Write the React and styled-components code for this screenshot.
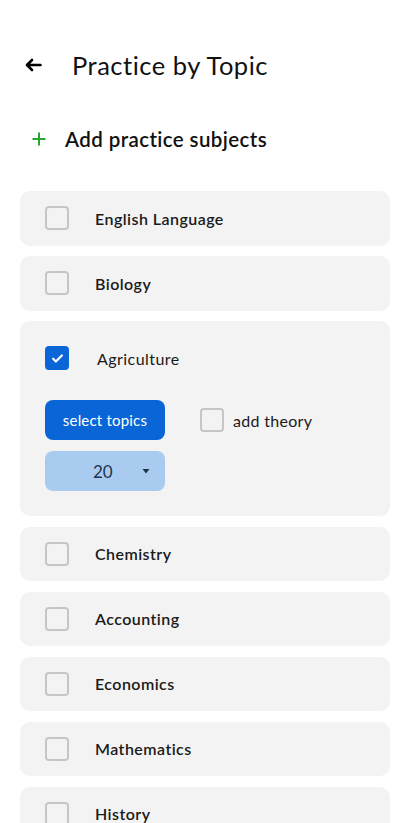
import React, { useState } from "react";
import styled, { createGlobalStyle } from "styled-components";

const Global = createGlobalStyle`
  html, body { margin: 0; padding: 0; background: #ffffff; }
  body { font-family: Lato, "Open Sans", sans-serif; color: #111; -webkit-font-smoothing: antialiased; }
  * { box-sizing: border-box; }
`;

const Page = styled.div`
  width: 411px;
  padding: 0 21px 0 20px;
`;

const Header = styled.header`
  display: flex;
  align-items: center;
  height: 62px;
  margin-top: 34px;
  padding-left: 5px;
  gap: 30px;
`;

const Title = styled.h1`
  margin: 0;
  font-size: 25.5px;
  font-weight: 400;
  color: #111;
  letter-spacing: 0.5px;
`;

const AddRow = styled.div`
  display: flex;
  align-items: center;
  gap: 19px;
  padding-left: 12px;
  height: 40px;
  margin-top: 23px;
  margin-bottom: 32px;
`;

const AddText = styled.span`
  font-size: 20.5px;
  font-weight: 600;
  color: #111;
  letter-spacing: 0.4px;
`;

const List = styled.div`
  display: flex;
  flex-direction: column;
  gap: 10.5px;
`;

const Card = styled.div`
  background: #f3f3f3;
  border-radius: 10px;
  padding: ${(p) => (p.$open ? "25px 25px 25px" : "0 25px")};
  min-height: 54.5px;
  display: flex;
  flex-direction: column;
  justify-content: center;
`;

const Row = styled.div`
  display: flex;
  align-items: center;
  gap: ${(p) => p.$gap || 26}px;
`;

const Box = styled.span`
  width: 24px;
  height: 24px;
  flex: none;
  border-radius: 4px;
  border: ${(p) => (p.$checked ? "none" : "2px solid #c6c6c6")};
  background: ${(p) => (p.$checked ? "#0a66d6" : "transparent")};
  display: inline-flex;
  align-items: center;
  justify-content: center;
`;

const Label = styled.span`
  font-size: 16px;
  font-weight: ${(p) => p.$weight || 600};
  color: #1a1a1a;
  letter-spacing: 0.45px;
`;

const Controls = styled.div`
  display: grid;
  grid-template-columns: 120px auto;
  column-gap: 35px;
  row-gap: 11px;
  margin-top: 30px;
  align-items: center;
`;

const Button = styled.button`
  height: 40px;
  width: 120px;
  border: none;
  border-radius: 8px;
  background: #0a66d6;
  color: #fff;
  font-family: inherit;
  font-size: 15px;
  letter-spacing: 0.2px;
  padding: 0;
`;

const Select = styled.div`
  height: 40px;
  width: 120px;
  border-radius: 8px;
  background: #a9cbf0;
  color: #1e3550;
  display: flex;
  align-items: center;
  font-size: 17px;
  padding-left: 48px;
  gap: 29px;
`;

const Theory = styled.div`
  display: flex;
  align-items: center;
  gap: 9px;
  font-size: 16px;
  color: #1a1a1a;
  letter-spacing: 0.3px;
`;

const Check = () => (
  <svg width="13" height="13" viewBox="0 0 24 24" fill="none" stroke="#fff" strokeWidth="4" strokeLinecap="round" strokeLinejoin="round">
    <path d="M4 12.5l5 5L20 6.5" />
  </svg>
);

const subjectsBefore = ["English Language", "Biology"];
const subjectsAfter = ["Chemistry", "Accounting", "Economics", "Mathematics", "History"];

export default function App() {
  const [n] = useState(20);
  return (
    <>
      <Global />
      <Page>
        <Header>
          <svg width="17" height="14" viewBox="0 0 17 14" fill="none" stroke="#000" strokeWidth="2.6" strokeLinecap="round" strokeLinejoin="round">
            <path d="M15.5 7H2M7 2L2 7l5 5" />
          </svg>
          <Title>Practice by Topic</Title>
        </Header>
        <AddRow>
          <svg width="14" height="14" viewBox="0 0 14 14" fill="none" stroke="#26a62e" strokeWidth="2">
            <path d="M7 0.5v13M0.5 7h13" />
          </svg>
          <AddText>Add practice subjects</AddText>
        </AddRow>
        <List>
          {subjectsBefore.map((s) => (
            <Card key={s}>
              <Row>
                <Box />
                <Label>{s}</Label>
              </Row>
            </Card>
          ))}
          <Card $open>
            <Row $gap={28}>
              <Box $checked>
                <Check />
              </Box>
              <Label $weight={400}>Agriculture</Label>
            </Row>
            <Controls>
              <Button>select topics</Button>
              <Theory>
                <Box />
                add theory
              </Theory>
              <Select>
                <span>{n}</span>
                <svg width="8" height="5" viewBox="0 0 8 5">
                  <path d="M0.5 0h7L4 4.5z" fill="#1e3550" />
                </svg>
              </Select>
            </Controls>
          </Card>
          {subjectsAfter.map((s) => (
            <Card key={s}>
              <Row>
                <Box />
                <Label>{s}</Label>
              </Row>
            </Card>
          ))}
        </List>
      </Page>
    </>
  );
}
